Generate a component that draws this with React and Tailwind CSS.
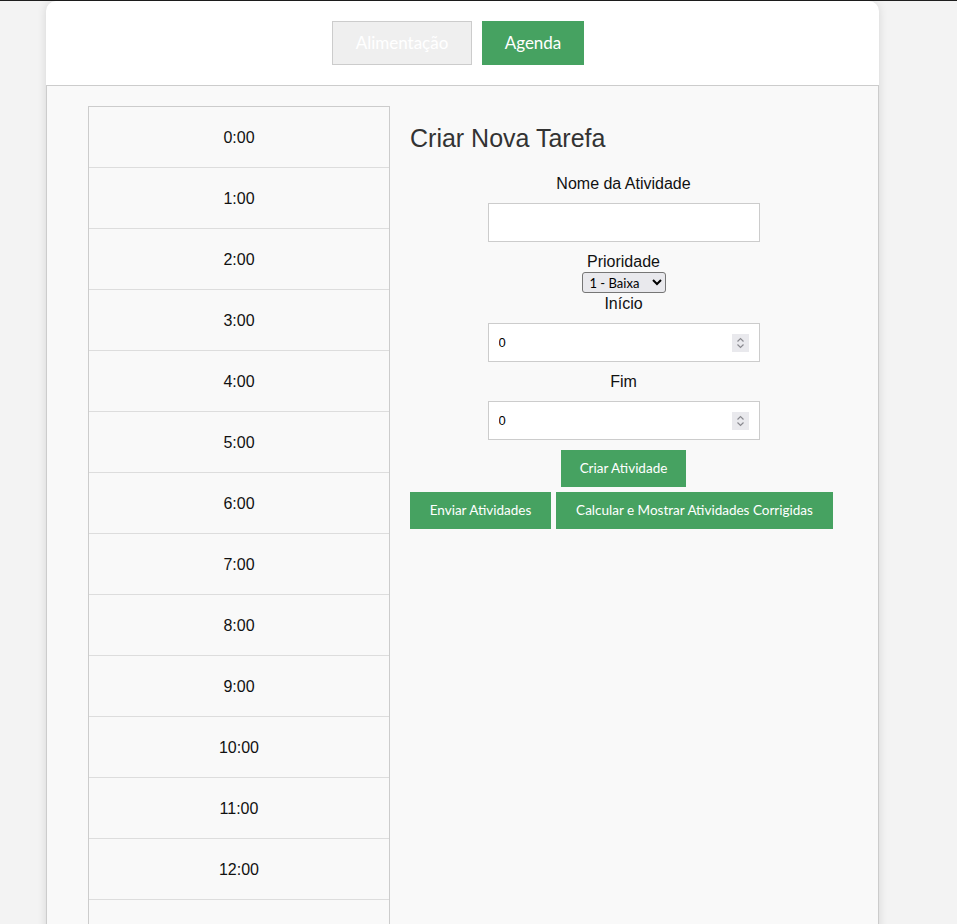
const HOURS = Array.from({ length: 24 }, (_, i) => `${i}:00`)

const btn =
  "whitespace-nowrap bg-[#46a261] text-[13.5px] leading-[17px] text-white font-['Lato',sans-serif]"

function Spin() {
  return (
    <span className="pointer-events-none absolute right-[11px] top-1/2 flex h-[18px] w-[17px] -translate-y-1/2 items-center justify-center bg-[#e9e9ed]">
      <svg width="9" height="12" viewBox="0 0 9 12" fill="none" stroke="#8a8a90" strokeWidth="1.2">
        <path d="M1.5 4.5 4.5 1.5 7.5 4.5" />
        <path d="M1.5 7.5 4.5 10.5 7.5 7.5" />
      </svg>
    </span>
  )
}

function NumberField({ className }) {
  return (
    <div className={`relative w-[272px] ${className}`}>
      <input
        type="number"
        defaultValue={0}
        className="h-[39px] w-full border border-[#cccccc] bg-white px-[10px] text-[13px] text-black [appearance:textfield] [&::-webkit-inner-spin-button]:appearance-none font-['Liberation_Sans',Arial,sans-serif]"
      />
      <Spin />
    </div>
  )
}

export default function App() {
  return (
    <div className="h-screen overflow-hidden bg-[#f3f3f3] font-['Liberation_Sans',Arial,sans-serif]">
      <div className="h-px bg-[#1e1e1e]" />
      <div className="ml-[46px] w-[833px] overflow-hidden rounded-t-[10px] bg-white shadow-[0_0_10px_rgba(0,0,0,0.12)]">
        {/* tabs */}
        <div className="flex justify-center gap-[10px] pt-[20px] pb-[20px] pr-[9px]">
          <button className="h-[44px] w-[140px] border border-[#cccccc] bg-[#efefef] text-[17px] text-white font-['Lato',sans-serif]">
            Alimentação
          </button>
          <button className="h-[44px] w-[102px] bg-[#46a261] text-[17px] text-white font-['Lato',sans-serif]">
            Agenda
          </button>
        </div>

        <div className="flex gap-[20px] border border-[#cccccc] bg-[#f9f9f9] px-[41px] pt-[20px]">
          {/* hours */}
          <div className="w-[302px] shrink-0 border-x border-t border-[#cccccc]">
            {HOURS.map((h) => (
              <div
                key={h}
                className="flex h-[61px] items-center justify-center border-b border-[#dddddd] pt-[2px] text-[16px] text-[#111]"
              >
                {h}
              </div>
            ))}
          </div>

          {/* form */}
          <div className="w-[428px]">
            <h2 className="mt-[18px] text-[25px] leading-[29px] text-[#333]">Criar Nova Tarefa</h2>
            <div className="mt-[22px] flex flex-col items-center text-[16px] text-[#111]">
              <label className="leading-[18px]">Nome da Atividade</label>
              <input
                type="text"
                className="mt-[10px] h-[39px] w-[272px] border border-[#cccccc] bg-white px-[10px]"
              />
              <label className="mt-[11px] leading-[18px]">Prioridade</label>
              <select className="mt-[1px] h-[21px] w-[84px] rounded-[3px] border border-[#767676] bg-[#e9e9ed] pl-[3px] text-[13px] text-black font-['Lato',sans-serif]">
                <option>1 - Baixa</option>
                <option>2 - Média</option>
                <option>3 - Alta</option>
              </select>
              <label className="mt-[2px] leading-[18px]">Início</label>
              <NumberField className="mt-[10px]" />
              <label className="mt-[11px] leading-[18px]">Fim</label>
              <NumberField className="mt-[10px]" />
              <button className={`mt-[10px] h-[37px] w-[125px] ${btn}`}>Criar Atividade</button>
            </div>
            <div className="mt-[5px] flex gap-[5px]">
              <button className={`h-[37px] w-[141px] ${btn}`}>Enviar Atividades</button>
              <button className={`h-[37px] w-[277px] ${btn}`}>
                Calcular e Mostrar Atividades Corrigidas
              </button>
            </div>
          </div>
        </div>
      </div>
    </div>
  )
}
